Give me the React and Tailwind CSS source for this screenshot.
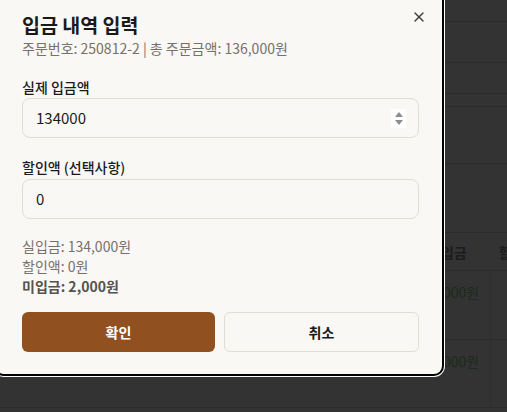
import React from 'react';
import { X } from 'lucide-react';

const font = { fontFamily: '"Noto Sans CJK KR", "Noto Sans", sans-serif' };

function Background() {
  return (
    <div className="absolute inset-0 bg-[#333333] text-[#1c1c1c] whitespace-nowrap">
      <div className="h-[22px] border-b border-[#2b2b2b]" />
      <div className="h-[41px] border-b border-[#2b2b2b]" />
      <div className="h-[31px] border-b border-[#2b2b2b]" />
      <div className="h-[13px] border-b border-[#2b2b2b]" />
      <div className="h-[57px] border-b border-[#2b2b2b]" />
      <div className="h-[69px] border-b border-[#2b2b2b]" />
      <div className="h-[38px] border-b border-[#2b2b2b] flex items-center text-sm font-bold">
        <span className="ml-[441px]">입금</span>
        <span className="ml-[32px]">할</span>
      </div>
      <div className="h-[69px] border-b border-[#2b2b2b] flex">
        <div className="w-[491px] shrink-0 border-r border-[#2e2e2e] text-sm text-[#1b2a1c] pl-[443px] pt-[11px]">000원</div>
      </div>
      <div className="h-[68px] border-b border-[#2b2b2b] flex">
        <div className="w-[491px] shrink-0 border-r border-[#2e2e2e] text-sm text-[#1b2a1c] pl-[443px] pt-[11px]">000원</div>
        <div className="text-sm text-[#1e2a44] pl-[16px] pt-[11px]">1</div>
      </div>
    </div>
  );
}

export default function App() {
  return (
    <div className="relative w-[507px] h-[412px] overflow-hidden" style={font}>
      <Background />
      <div className="absolute left-[-6px] top-[-16px] w-[450px] rounded-[10px] bg-[#f9f8f5] border-2 border-black ring-1 ring-white pl-[26px] pr-[23px] pt-[25px] pb-[22px]">
        <button className="absolute right-[15px] top-[23px] text-[#3c3c3c]">
          <X size={16} strokeWidth={2} />
        </button>
        <h2 className="text-[19.5px] font-bold text-[#1a1a1a] leading-7">입금 내역 입력</h2>
        <p className="text-sm text-[#76716b] leading-5 -mt-px">주문번호: 250812-2 | 총 주문금액: 136,000원</p>

        <div className="mt-[19px]">
          <label className="block text-sm font-medium text-[#1a1a1a] leading-5">실제 입금액</label>
          <div className="mt-[1px] h-[40px] rounded-lg border border-[#e0ddd6] bg-[#f9f8f5] flex items-center pl-[13px] pr-[12px]">
            <span className="flex-1 text-[15px] text-[#1a1a1a]">134000</span>
            <div className="flex flex-col items-center justify-center gap-[3px] w-[15px] h-[19px] bg-white">
              <svg width="8" height="5" viewBox="0 0 8 5"><path d="M4 0L8 5H0Z" fill="#8c8c8c" /></svg>
              <svg width="8" height="5" viewBox="0 0 8 5"><path d="M0 0H8L4 5Z" fill="#8c8c8c" /></svg>
            </div>
          </div>
        </div>

        <div className="mt-[19px]">
          <label className="block text-sm font-medium text-[#1a1a1a] leading-5">할인액 (선택사항)</label>
          <div className="mt-[2px] h-[40px] rounded-lg border border-[#e0ddd6] bg-[#f9f8f5] flex items-center pl-[13px]">
            <span className="text-[15px] text-[#1a1a1a]">0</span>
          </div>
        </div>

        <div className="mt-[17px] text-sm leading-5 text-[#76716b]">
          <div>실입금: 134,000원</div>
          <div>할인액: 0원</div>
          <div className="font-bold text-[#56524d]">미입금: 2,000원</div>
        </div>

        <div className="mt-[16px] flex gap-[9px]">
          <button className="flex-1 h-[40px] rounded-md bg-[#91501f] text-white text-sm font-bold">확인</button>
          <button className="flex-1 h-[40px] rounded-md border border-[#e0ddd6] bg-[#f9f8f5] text-[#1a1a1a] text-sm font-bold">취소</button>
        </div>
      </div>
    </div>
  );
}
